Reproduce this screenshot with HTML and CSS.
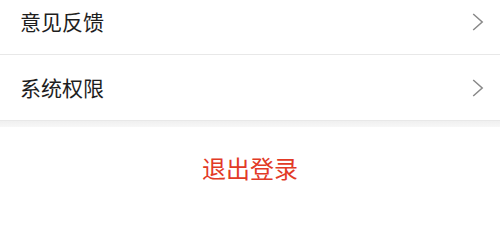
FILE: index.html
```html
<!DOCTYPE html>
<html lang="zh-CN">
<head>
<meta charset="utf-8">
<link rel="stylesheet" href="styles.css">
</head>
<body>
<div class="list">
  <div class="row">
    <span class="label">意见反馈</span>
    <svg class="chev" width="12" height="18" viewBox="0 0 12 18"><path d="M1.2 1 L10.2 9 L1.2 17" fill="none" stroke="#888888" stroke-width="1.5"/></svg>
  </div>
  <div class="row">
    <span class="label">系统权限</span>
    <svg class="chev" width="12" height="18" viewBox="0 0 12 18"><path d="M1.2 1 L10.2 9 L1.2 17" fill="none" stroke="#888888" stroke-width="1.5"/></svg>
  </div>
</div>
<div class="gap"></div>
<div class="logout">退出登录</div>
</body>
</html>
```

FILE: styles.css
```css
html, body {
  margin: 0;
  padding: 0;
  background: #ffffff;
  font-family: "Noto Sans CJK SC", "Noto Sans", sans-serif;
}
.list {
  margin-top: -11px;
}
.row {
  height: 65px;
  display: flex;
  align-items: center;
  justify-content: space-between;
  padding: 0 16px 0 20px;
  border-bottom: 1px solid #e8e8e8;
}
.label {
  font-size: 21px;
  color: #1e1e1e;
  line-height: 1;
}
.chev {
  display: block;
}
.gap {
  height: 6px;
  background: linear-gradient(#f0f0f0, #f7f7f7);
}
.logout {
  height: 80px;
  display: flex;
  align-items: center;
  justify-content: center;
  font-size: 24px;
  color: #e23a26;
}
```
